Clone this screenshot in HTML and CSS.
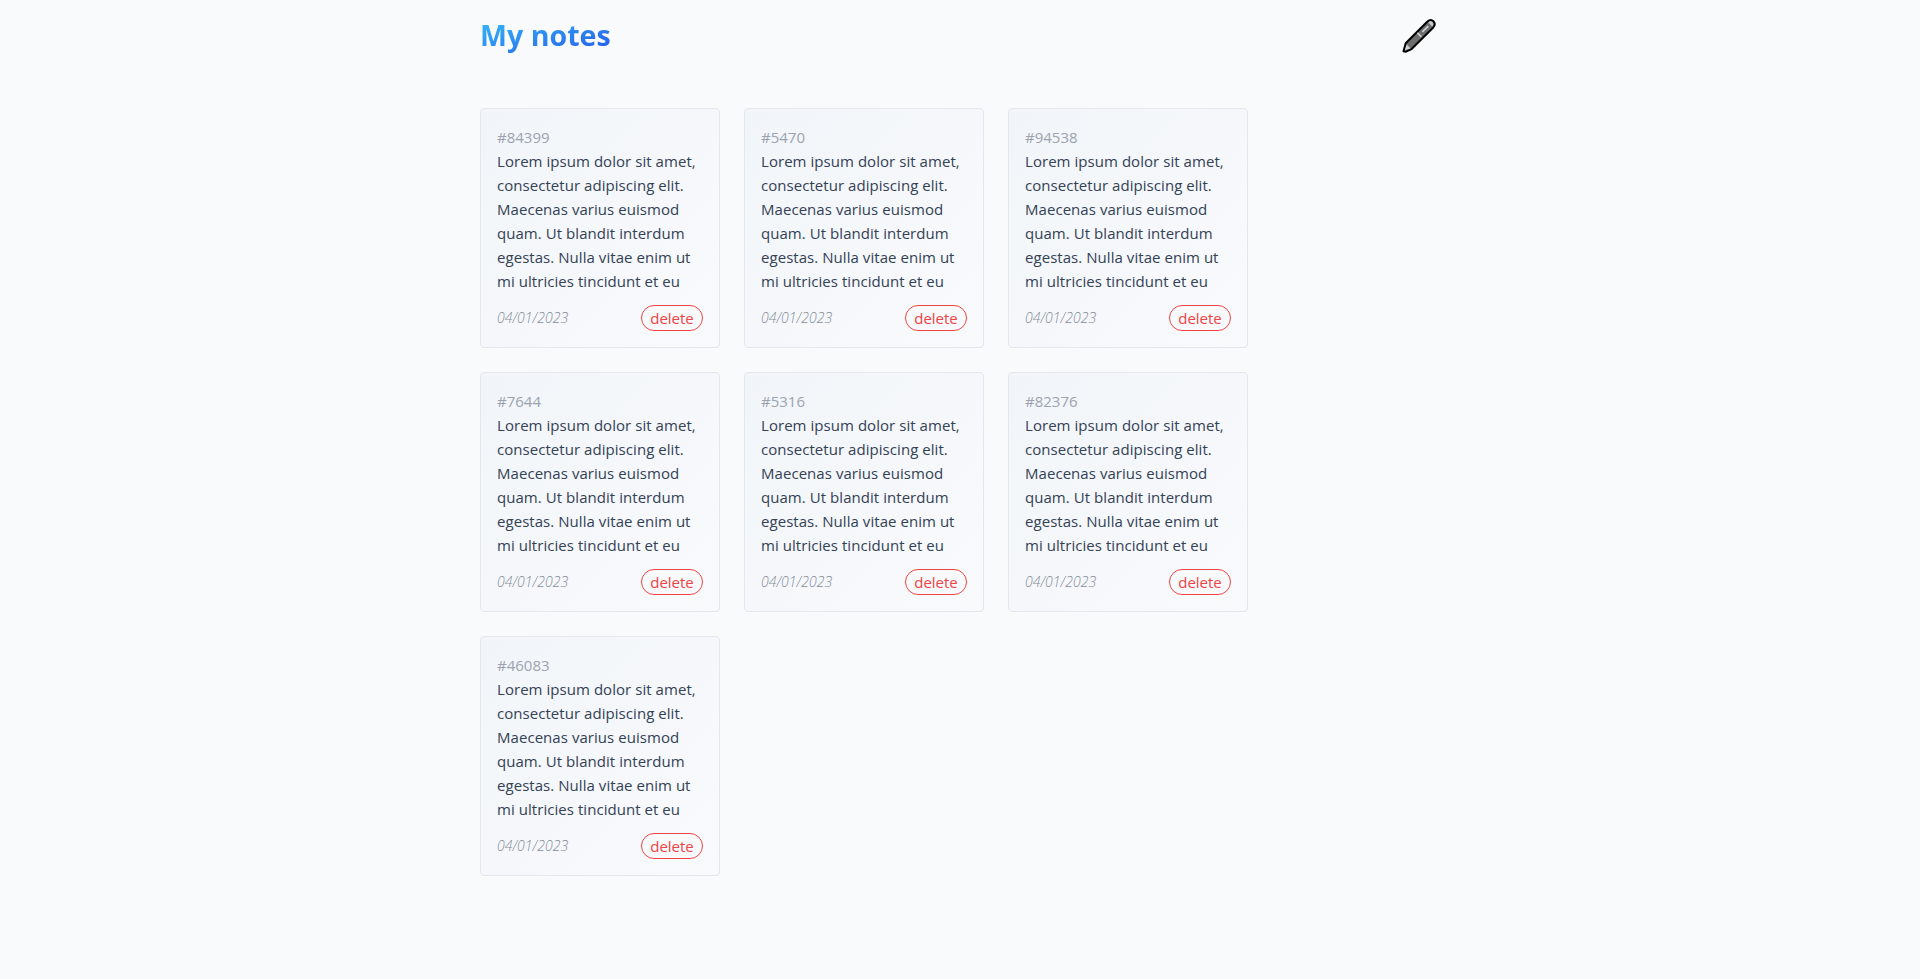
FILE: index.html
```
<!DOCTYPE html>
<html lang="en">
<head>
<meta charset="utf-8">
<title>My notes</title>
<link rel="stylesheet" href="styles.css">
</head>
<body>
<div class="container">
<header class="header">
<h1 class="title">My notes</h1>
<button class="add" aria-label="Add note">
<svg width="34" height="35" viewBox="0 0 34 35">
<path d="M1.5 33.3 L3.7 25.2 L25.2 3.8 Q28.6 .5 31.5 3.3 Q34.2 6.6 31 9.8 L9.6 31 L3.5 33.8 Z" fill="#6d6d6d" stroke="#000" stroke-width="2" stroke-linejoin="round"/>
<path d="M2.7 32.3 L4.7 26.6 L8.6 30.4 Z" fill="#d2d2d2"/>
<path d="M26.2 4.4 Q28.7 2.4 30.6 4.2 Q32.2 6.2 30.2 8.6 Z" fill="#c8c8c8"/>
<path d="M15.4 14.9 L19.3 18.8" stroke="#ccc" stroke-width="1.7"/>
<path d="M20.4 13.8 L26.2 8.2" stroke="#d0d0d0" stroke-width="1.6"/>
</svg>
</button>
</header>
<main class="grid" id="grid"></main>
</div>
<template id="note">
<article class="card">
<div class="id"></div>
<p class="body">Lorem ipsum dolor sit amet,<br>consectetur adipiscing elit.<br>Maecenas varius euismod<br>quam. Ut blandit interdum<br>egestas. Nulla vitae enim ut<br>mi ultricies tincidunt et eu</p>
<footer class="foot"><em class="date">04/01/2023</em><button class="delete">delete</button></footer>
</article>
</template>
<script src="notes.js"></script>
</body>
</html>
```
FILE: styles.css
```
* { box-sizing: border-box; }
body { margin: 0; background: #f9fafc; font-family: "Open Sans", "Noto Sans", sans-serif; color: #334155; }
.container { width: 960px; margin: 0 auto; }
.header { display: flex; justify-content: space-between; align-items: center; height: 70px; }
.title { margin: 0; font-size: 28.6px; line-height: 36px; font-weight: 700; letter-spacing: 0; color: transparent; background: linear-gradient(to bottom right, #38bdf8, #2563eb 90%); background-clip: text; -webkit-background-clip: text; }
.add { border: 0; padding: 0; margin-right: 4px; background: none; display: flex; }
.grid { display: grid; grid-template-columns: repeat(3, 240px); gap: 24px; padding-top: 38px; }
.card { height: 240px; padding: 16px; border: 1px solid #e5e7eb; border-radius: 4px; background: linear-gradient(to bottom right, #f1f5f9, #f9fafc); display: flex; flex-direction: column; line-height: 24px; font-size: 15px; }
.id { color: #9ca3af; }
.body { margin: 0; height: 144px; white-space: nowrap; letter-spacing: 0.05px; }
.foot { display: flex; justify-content: space-between; align-items: center; margin-top: auto; }
.date { font-size: 14px; font-weight: 300; letter-spacing: 0.05px; color: #828b98; }
.delete { width: 62px; height: 26px; padding: 0; border: 1px solid #ef4444; border-radius: 13px; background: none; color: #ef4444; font: 15px/24px "Open Sans", "Noto Sans", sans-serif; }
```
FILE: notes.js
```
const template = document.getElementById("note");
const grid = document.getElementById("grid");
["84399", "5470", "94538", "7644", "5316", "82376", "46083"].forEach((id) => {
  const card = template.content.cloneNode(true);
  card.querySelector(".id").textContent = "#" + id;
  grid.appendChild(card);
});
```
